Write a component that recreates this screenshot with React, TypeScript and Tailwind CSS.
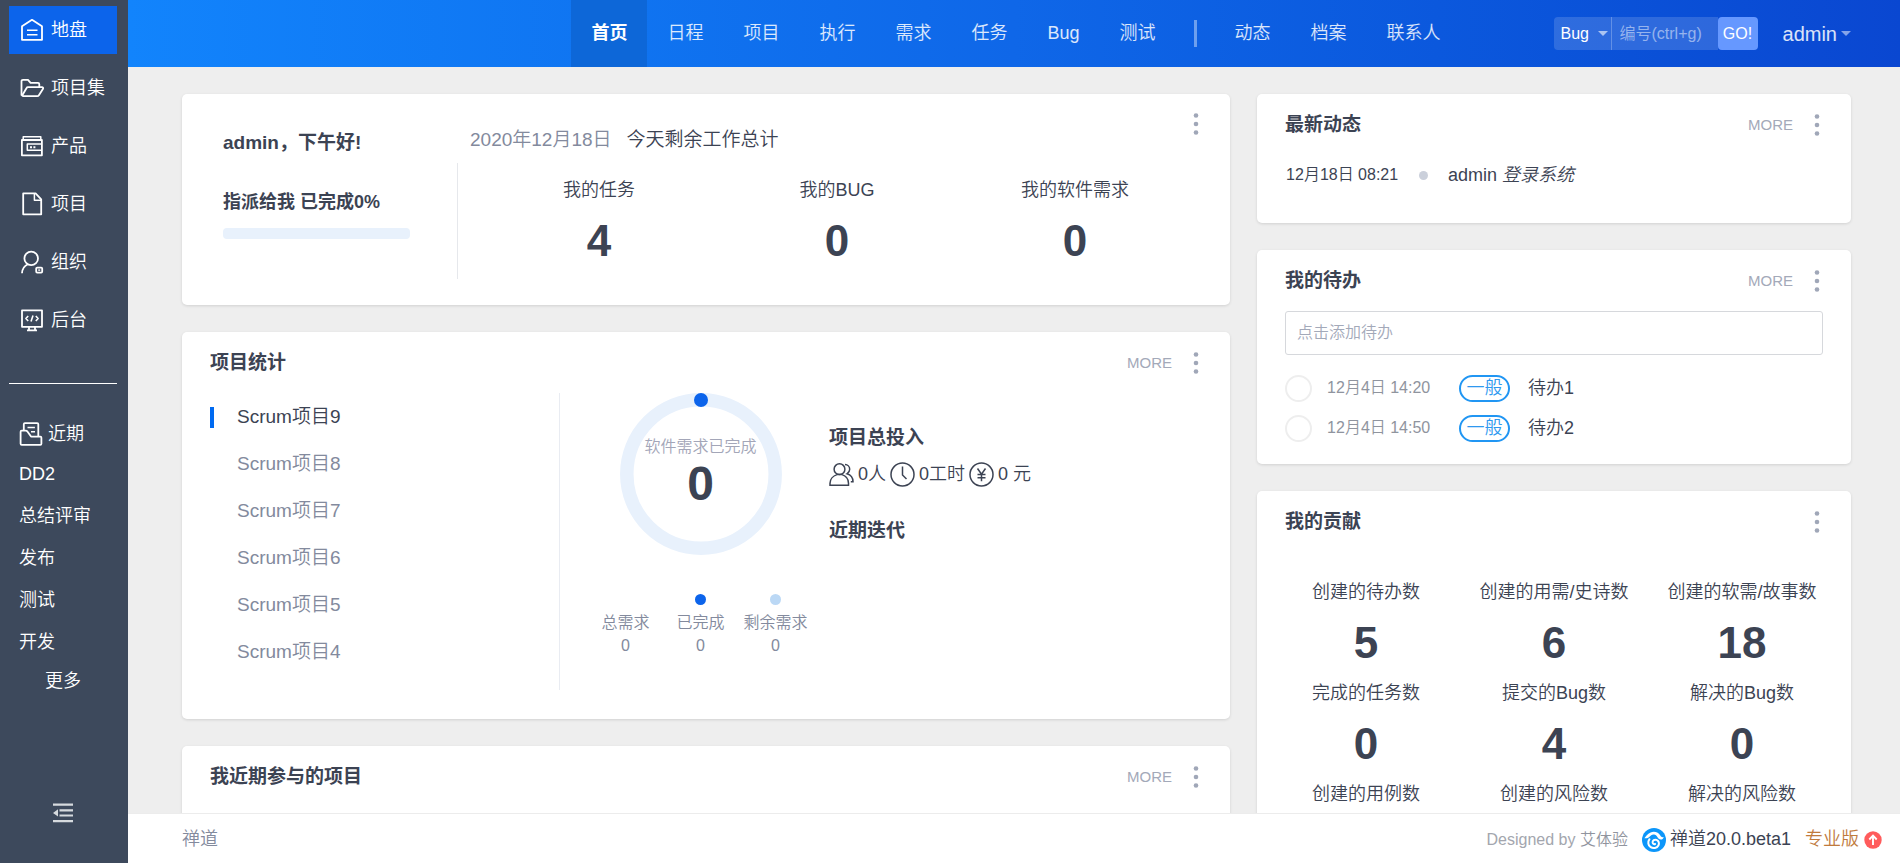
import type { FC, ReactNode } from "react";

const MENU = [
	{ name: "地盘", icon: "home", active: true },
	{ name: "项目集", icon: "program" },
	{ name: "产品", icon: "product" },
	{ name: "项目", icon: "project" },
	{ name: "组织", icon: "org" },
	{ name: "后台", icon: "admin" },
];

const RECENT = ["DD2", "总结评审", "发布", "测试", "开发"];

const TABS = ["首页", "日程", "项目", "执行", "需求", "任务", "Bug", "测试"];
const MORE_TABS = ["动态", "档案", "联系人"];

const PROJECTS = [9, 8, 7, 6, 5, 4];

const TODOS = [
	{ time: "12月4日 14:20", name: "待办1" },
	{ time: "12月4日 14:50", name: "待办2" },
];

const CONTRIBUTIONS: { label: string; value?: number }[] = [
	{ label: "创建的待办数", value: 5 },
	{ label: "创建的用需/史诗数", value: 6 },
	{ label: "创建的软需/故事数", value: 18 },
	{ label: "完成的任务数", value: 0 },
	{ label: "提交的Bug数", value: 4 },
	{ label: "解决的Bug数", value: 0 },
	{ label: "创建的用例数" },
	{ label: "创建的风险数" },
	{ label: "解决的风险数" },
];

const SHAPES: Record<string, ReactNode> = {
	home: (
		<>
			<path d="M2 8.2 12 1.8l10 6.4v13.6H2z" />
			<path d="M7 12.3h10.5M7 16.8h10.5" strokeWidth="1.4" />
		</>
	),
	program: (
		<>
			<path d="M1.5 19.5V5.3c0-.9.6-1.5 1.5-1.5h5l2.6 3.1h7.4c.8 0 1.3.5 1.3 1.3v3" />
			<path d="M1.7 20.2 6.6 12c.3-.6.7-.8 1.3-.8h14c1.1 0 1.6.8 1 1.7l-4 6.3c-.4.7-.9 1-1.7 1H2.6" />
		</>
	),
	product: (
		<>
			<path d="M3.2 6V2.8h17.6V6" strokeWidth="1.5" />
			<path d="M1.9 6h20v15.3h-20z" />
			<path d="M22 10H7.3v6.3H22" strokeWidth="1.5" />
			<path d="M10 13.2h2M13.4 13.2h2" strokeWidth="2" />
		</>
	),
	project: (
		<>
			<path d="M3.2 1.4h12.4l5.6 6v14.9h-18z" />
			<path d="M14.4 1.6v6.6h6.8" strokeWidth="1.5" />
		</>
	),
	org: (
		<>
			<circle cx="11.2" cy="8.4" r="6.8" />
			<path d="M2 23.2c.2-4.2 2.4-7.4 5.8-9" />
			<rect x="16.2" y="17.6" width="6" height="5" rx="1" />
			<path d="M18.2 20.1h2" strokeWidth="1.4" />
		</>
	),
	admin: (
		<>
			<path d="M2 2.4h20v16.4H2z" />
			<path d="M9 19v3M15 19v3M7 22.4h10" />
			<path d="M8.2 8 5.9 10.5 8.2 13M15.8 8l2.3 2.5-2.3 2.5M13 7.6l-2 5.9" strokeWidth="1.6" />
		</>
	),
	recent: (
		<>
			<path d="M4.8 8V2.2c0-.7.4-1.1 1.1-1.1h12.3c.7 0 1.1.4 1.1 1.1v12" />
			<path d="M4.5 8.7H2.7c-.7 0-1.1.4-1.1 1.1v12c0 .7.4 1.1 1.1 1.1h18.6c.7 0 1.1-.4 1.1-1.1v-6.1c0-.7-.4-1.1-1.1-1.1H12L8.600 9.800c-.5-.7-1.1-1.1-2-1.1z" />
			<path d="M8.5 5.5h7.4M12 9.8h4" strokeWidth="1.5" />
		</>
	),
};

const MenuIcon: FC<{ name: string }> = ({ name }) => (
	<svg
		viewBox="0 0 24 24"
		className="size-6 shrink-0"
		fill="none"
		stroke="currentColor"
		strokeWidth="1.8"
		strokeLinejoin="round"
		aria-hidden="true"
	>
		{SHAPES[name]}
	</svg>
);

const Caret: FC<{ className?: string }> = ({ className }) => (
	<svg viewBox="0 0 10 5" className={className} fill="currentColor" aria-hidden="true">
		<path d="M0 0h10L5 5z" />
	</svg>
);

const Kebab: FC = () => (
	<button type="button" aria-label="菜单" className="flex h-7 w-3 justify-center text-[#a0a7b8]">
		<svg viewBox="0 0 6 28" className="h-7 w-1.5" fill="currentColor" aria-hidden="true">
			<circle cx="3" cy="5.5" r="2.3" />
			<circle cx="3" cy="14" r="2.3" />
			<circle cx="3" cy="22.5" r="2.3" />
		</svg>
	</button>
);

const Card: FC<{ title: string; more?: boolean; className?: string; children?: ReactNode }> = ({
	title,
	more = true,
	className = "",
	children,
}) => (
	<section className={`rounded-[5px] bg-white shadow-[0_1px_3px_rgba(0,0,0,0.12)] ${className}`}>
		<header className="flex items-center justify-between px-7 pt-[17px]">
			<h2 className="text-[19px] leading-7 font-bold">{title}</h2>
			<div className="flex items-center gap-[18px]">
				{more && (
					<a href="#more" className="text-[15px] leading-7 text-[#a3a9b9]">
						MORE
					</a>
				)}
				<Kebab />
			</div>
		</header>
		{children}
	</section>
);

const Stat: FC<{ label: string; value?: number }> = ({ label, value }) => (
	<div className="text-center">
		<div className="text-[18px] leading-7">{label}</div>
		{value !== undefined && (
			<div className="pt-3 text-[44px] leading-[50px] font-bold">{value}</div>
		)}
	</div>
);

const Sidebar: FC = () => (
	<aside className="flex w-32 shrink-0 flex-col bg-[#3d495c] text-[18px] text-white">
		<nav className="flex flex-col gap-2.5 pt-1.5 pr-[11px] pl-[9px]">
			{MENU.map((item) => (
				<a
					key={item.name}
					href="#menu"
					className={`flex h-12 items-center gap-[7px] pl-[11px] whitespace-nowrap ${item.active ? "bg-[#0c64eb]" : ""}`}
				>
					<MenuIcon name={item.icon} />
					{item.name}
				</a>
			))}
		</nav>
		<hr className="mt-[39px] mr-[11px] ml-[9px] border-white" />
		<div className="mt-[31px] flex h-[38px] items-center gap-[5px] pl-[19px]">
			<MenuIcon name="recent" />
			近期
		</div>
		<ul>
			{RECENT.map((name) => (
				<li key={name}>
					<a href="#recent" className="flex h-[42px] items-center pl-[19px]">
						{name}
					</a>
				</li>
			))}
		</ul>
		<a href="#all" className="flex h-9 items-center justify-center pr-0.5">
			更多
		</a>
		<button
			type="button"
			aria-label="收起"
			className="mt-auto mb-10 flex justify-center pr-0.5 text-[#d6dade]"
		>
			<svg viewBox="0 0 20 20" className="size-5" fill="currentColor" aria-hidden="true">
				<path d="M0 .5h20v2.2H0zM6.5 6.2H20v2.2H6.5zM6.5 11.4H20v2.2H6.500zM0 17h20v2.2H0zM0 9.9l5-3.6v7.2z" />
			</svg>
		</button>
	</aside>
);

const Header: FC = () => (
	<header className="grid h-[67px] shrink-0 grid-cols-[1fr_auto_1fr] items-center bg-linear-to-r from-[#1284fc] via-[#0f67e8] to-[#0a47d1] pl-1 text-[18px] text-white/85">
		<nav className="col-start-2 flex h-full items-center">
			{TABS.map((tab, i) => (
				<a
					key={tab}
					href="#tab"
					className={`flex h-full items-center px-5 ${i === 0 ? "bg-[#0d67d8] font-bold text-white" : ""}`}
				>
					{tab}
				</a>
			))}
			<span className="mx-[18px] h-[27px] w-[3px] bg-white/40" />
			{MORE_TABS.map((tab) => (
				<a key={tab} href="#tab" className="flex h-full items-center px-5">
					{tab}
				</a>
			))}
		</nav>
		<div className="flex items-center justify-end pr-[49px]">
			<form className="flex h-[33px] items-center text-base">
				<div className="relative">
					<select
						aria-label="搜索类型"
						className="h-[33px] w-[58px] appearance-none rounded-l-[4px] border-r border-white/25 bg-white/15 pl-[7px] text-white"
					>
						<option>Bug</option>
					</select>
					<Caret className="pointer-events-none absolute top-3.5 right-1 w-2.5 text-white/60" />
				</div>
				<input
					aria-label="编号"
					placeholder="编号(ctrl+g)"
					className="h-[33px] w-[106px] bg-white/15 pl-2 placeholder:text-white/50"
				/>
				<button type="submit" className="h-[33px] w-10 rounded-[4px] bg-[#6698ff] text-white">
					GO!
				</button>
			</form>
			<button type="button" className="ml-[25px] flex items-center gap-1 text-[20px]">
				admin
				<Caret className="w-2.5 text-white/50" />
			</button>
		</div>
	</header>
);

const Welcome: FC = () => (
	<section className="flex h-[211px] rounded-[5px] bg-white shadow-[0_1px_3px_rgba(0,0,0,0.12)]">
		<div className="w-[275px] shrink-0 pt-[35px] pr-[47px] pl-[41px]">
			<h2 className="text-[19px] leading-7 font-bold">admin，下午好!</h2>
			<p className="mt-[31px] text-[18px] leading-7 font-bold whitespace-nowrap">
				指派给我 已完成0%
			</p>
			<div className="mt-3 h-[11px] rounded-[4px] bg-[#e8f1fc]" />
		</div>
		<div className="flex grow flex-col">
			<div className="flex h-[69px] justify-between pt-4 pr-7 pl-[13px]">
				<p className="flex gap-[15px] pt-4 text-[19px] leading-7">
					<span className="text-[#838a9d]">2020年12月18日</span>
					<span>今天剩余工作总计</span>
				</p>
				<Kebab />
			</div>
			<div className="mb-[26px] grid grow grid-cols-3 border-l border-[#e6e8ec] pt-[13px] pr-9 pl-[22px]">
				<Stat label="我的任务" value={4} />
				<Stat label="我的BUG" value={0} />
				<Stat label="我的软件需求" value={0} />
			</div>
		</div>
	</section>
);

const Legend: FC<{ label: string; dot: string }> = ({ label, dot }) => (
	<div className="flex flex-col items-center text-base leading-[23px] whitespace-nowrap">
		<span className={`mb-1.5 size-[11px] rounded-full ${dot}`} />
		<span>{label}</span>
		<span>0</span>
	</div>
);

const ProjectStats: FC = () => (
	<Card title="项目统计" className="h-[387px]">
		<div className="mt-4 flex h-[297px] pl-7">
			<ul className="w-[349px] pt-px">
				{PROJECTS.map((n, i) => (
					<li key={n} className="flex h-[47px] items-center">
						<span className={`h-[21px] w-1 ${i === 0 ? "bg-[#006af1]" : ""}`} />
						<a
							href="#project"
							className={`pl-[23px] text-[19px] ${i === 0 ? "" : "text-[#838a9d]"}`}
						>
							Scrum项目{n}
						</a>
					</li>
				))}
			</ul>
			<div className="w-[270px] border-l border-[#e9ecf2] pl-7">
				<div className="relative flex h-[162px] w-[225px] flex-col items-center pt-[42px]">
					<svg
						viewBox="0 0 162 162"
						className="absolute top-0 size-[162px]"
						fill="none"
						aria-hidden="true"
					>
						<circle cx="81" cy="81" r="74.2" stroke="#e8f1fc" strokeWidth="13.5" />
						<circle cx="81" cy="7" r="7" fill="#0c64eb" />
					</svg>
					<span className="relative text-base leading-6 text-[#a3a6b8]">软件需求已完成</span>
					<span className="relative text-[48px] leading-[50px] font-bold">0</span>
				</div>
				<div className="grid w-[225px] grid-cols-3 pt-[39px] text-[#838a9d]">
					<Legend label="总需求" dot="bg-transparent" />
					<Legend label="已完成" dot="bg-[#0c64eb]" />
					<Legend label="剩余需求" dot="bg-[#bbd8f5]" />
				</div>
			</div>
			<div className="pt-[31px] text-[18px]">
				<h3 className="text-[19px] leading-7 font-bold">项目总投入</h3>
				<div className="mt-[7px] flex h-[30px] items-center gap-1">
					<svg viewBox="0 0 25 25" className="size-[25px]" fill="none" stroke="currentColor" strokeWidth="1.5" aria-hidden="true">
						<circle cx="10.5" cy="7.2" r="5.4" />
						<path d="M1 23.3v-2c0-4 3-7.5 7-8.7h5c4 1.2 6.5 4.7 6.5 8.7v2z" />
						<path d="M16 2.6c2.7.2 4.7 2.2 4.7 4.6 0 2-1 3.5-2.7 4.6 3.4 1 6 4 6 8h-2.2" />
					</svg>
					<span>0人</span>
					<svg viewBox="0 0 25 25" className="size-[25px]" fill="none" stroke="currentColor" strokeWidth="1.5" aria-hidden="true">
						<circle cx="12.5" cy="12.5" r="11.5" />
						<path d="M12.5 4.5V13l4 4" />
					</svg>
					<span>0工时</span>
					<svg viewBox="0 0 25 25" className="size-[25px]" fill="none" stroke="currentColor" strokeWidth="1.5" aria-hidden="true">
						<circle cx="12.5" cy="12.5" r="11.5" />
						<path d="m8.5 6.5 4 5.8 4-5.8M12.5 12.3v6.900M8.5 12.5h8M8.5 15.7h8" />
					</svg>
					<span>0 元</span>
				</div>
				<h3 className="mt-7 text-[19px] leading-7 font-bold">近期迭代</h3>
			</div>
		</div>
	</Card>
);

const Todos: FC = () => (
	<Card title="我的待办" className="h-[214px]">
		<div className="px-7 pt-4">
			<input
				aria-label="添加待办"
				placeholder="点击添加待办"
				className="h-11 w-full rounded-[3px] border border-[#d6d8dc] pl-[11px] text-base placeholder:text-[#a3a9b9]"
			/>
			<ul className="pt-[13px]">
				{TODOS.map((todo) => (
					<li key={todo.name}>
						<label className="flex h-10 items-center">
							<input
								type="checkbox"
								className="size-[27px] appearance-none rounded-full border-2 border-[#eeeeee]"
							/>
							<span className="w-[147px] pl-[15px] text-base text-[#8f949e]">{todo.time}</span>
							<span className="flex h-[27px] w-[51px] items-center justify-center rounded-full border-2 border-[#2196f3] text-[18px] text-[#2e98ef]">
								一般
							</span>
							<span className="pl-[18px] text-[18px]">{todo.name}</span>
						</label>
					</li>
				))}
			</ul>
		</div>
	</Card>
);

const Footer: FC = () => (
	<footer className="flex h-[50px] shrink-0 items-center border-t border-[#ececec] bg-white pt-0.5 pr-[18px] pl-[54px] text-[18px]">
		<a href="#zentao" className="text-[#838a9d]">
			禅道
		</a>
		<span className="ml-auto text-base text-[#a3a6ae]">
			Designed by <a href="#designer" className="text-[#90949e]">艾体验</a>
		</span>
		<a href="#version" className="ml-[14px] flex items-center gap-1">
			<svg viewBox="0 0 24 24" className="size-6" aria-hidden="true">
				<circle cx="12" cy="12" r="12" fill="#0c96fa" />
				<path
					d="M2.4 10.2C4 8.5 5.2 5.6 8.6 4.4c4.2-1.5 8.2.2 9.700 3.2.9 1.600 2.300 1.900 3.500 1.300-.5 2.600-3.600 3.500-5.400 1.500-1.300-1.500-1.900-3.500-4.200-3.900-2.200-.3-3.500 1-4.700 2.200-1.500 1.400-3.300 2-5.100 1.500z"
					fill="#fff"
				/>
				<path
					d="M7.5 11.2c-2 2.6-1.5 6.2 1.2 8 2.600 1.700 6.300.9 7.700-1.700 1.200-2.300.3-4.800-1.900-5.600-2-.7-4.100.6-3.900 2.600.1 1.400 1.400 2 2.500 1.500"
					fill="none"
					stroke="#fff"
					strokeWidth="2"
					strokeLinecap="round"
				/>
			</svg>
			禅道20.0.beta1
		</a>
		<a href="#pro" className="ml-[14px] flex items-center gap-[5px] text-[#c07a3c]">
			专业版
			<svg viewBox="0 0 18 18" className="size-[18px]" aria-hidden="true">
				<circle cx="9" cy="9" r="8.7" fill="#ff5c5c" />
				<path d="M9 14V5M5.3 8.5 9 4.7l3.7 3.8" fill="none" stroke="#fff" strokeWidth="1.9" />
			</svg>
		</a>
	</footer>
);

export default function App() {
	return (
		<div className="flex h-screen bg-[#eeeeee] font-['Liberation_Sans','Noto_Sans_CJK_SC',sans-serif] font-[350] text-[#3c4353]">
			<Sidebar />
			<div className="flex min-w-0 grow flex-col">
				<Header />
				<main className="grid min-h-0 grow grid-cols-[30fr_17fr] gap-[27px] overflow-y-auto pt-[27px] pr-[49px] pl-[54px] [scrollbar-width:none]">
					<div className="flex flex-col gap-[27px]">
						<Welcome />
						<ProjectStats />
						<Card title="我近期参与的项目" className="h-[240px] shrink-0" />
					</div>
					<div className="flex flex-col gap-[27px]">
						<Card title="最新动态" className="h-[129px]">
							<div className="flex items-center pt-[22px] pl-[29px]">
								<time className="w-[133px] text-base leading-7">12月18日 08:21</time>
								<span className="size-[9px] rounded-full bg-[#cbd0db]" />
								<p className="pl-5 text-[18px] leading-7">
									admin <em>登录系统</em>
								</p>
							</div>
						</Card>
						<Todos />
						<Card title="我的贡献" more={false}>
							<div className="grid grid-cols-3 gap-y-[11px] px-[15px] pt-[42px] pb-5">
								{CONTRIBUTIONS.map((item) => (
									<Stat key={item.label} label={item.label} value={item.value} />
								))}
							</div>
						</Card>
					</div>
				</main>
				<Footer />
			</div>
		</div>
	);
}
